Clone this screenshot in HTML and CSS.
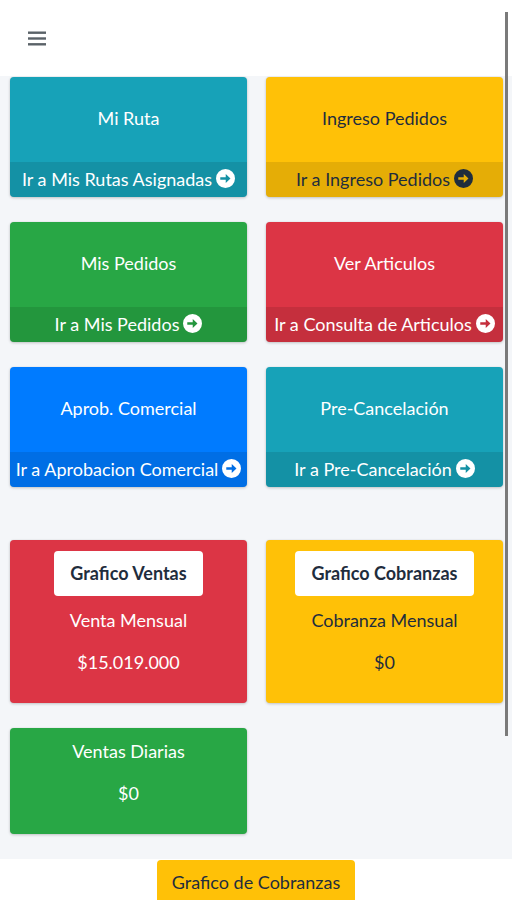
FILE: index.html
```html
<!DOCTYPE html>
<html lang="es">

<head>
    <meta charset="UTF-8">
    <meta name="viewport" content="width=device-width, initial-scale=1.0">
    <title>Inicio</title>
    <link rel="stylesheet" href="styles.css">
</head>

<body>
    <nav class="navbar">
        <span class="menu-toggle">
            <svg width="18" height="15" viewBox="0 0 18 15">
                <rect x="0" y="0.5" width="18" height="2.4" fill="#5a6268"/>
                <rect x="0" y="6.3" width="18" height="2.4" fill="#5a6268"/>
                <rect x="0" y="12.1" width="18" height="2.4" fill="#5a6268"/>
            </svg>
        </span>
    </nav>

    <div class="content">
        <div class="grid">
            <div class="small-box bg-info">
                <div class="inner">Mi Ruta</div>
                <a class="box-footer">Ir a Mis Rutas Asignadas <svg class="arrow" viewBox="0 0 16 16"><path fill-rule="evenodd" d="M8 0a8 8 0 1 0 0 16A8 8 0 1 0 8 0zM3.6 6.9h4.6V4.2L12.2 8l-4 3.8V9.1H3.6z"/></svg></a>
            </div>
            <div class="small-box bg-warning">
                <div class="inner">Ingreso Pedidos</div>
                <a class="box-footer">Ir a Ingreso Pedidos <svg class="arrow" viewBox="0 0 16 16"><path fill-rule="evenodd" d="M8 0a8 8 0 1 0 0 16A8 8 0 1 0 8 0zM3.6 6.9h4.6V4.2L12.2 8l-4 3.8V9.1H3.6z"/></svg></a>
            </div>
            <div class="small-box bg-success">
                <div class="inner">Mis Pedidos</div>
                <a class="box-footer">Ir a Mis Pedidos <svg class="arrow" viewBox="0 0 16 16"><path fill-rule="evenodd" d="M8 0a8 8 0 1 0 0 16A8 8 0 1 0 8 0zM3.6 6.9h4.6V4.2L12.2 8l-4 3.8V9.1H3.6z"/></svg></a>
            </div>
            <div class="small-box bg-danger">
                <div class="inner">Ver Articulos</div>
                <a class="box-footer">Ir a Consulta de Articulos <svg class="arrow" viewBox="0 0 16 16"><path fill-rule="evenodd" d="M8 0a8 8 0 1 0 0 16A8 8 0 1 0 8 0zM3.6 6.9h4.6V4.2L12.2 8l-4 3.8V9.1H3.6z"/></svg></a>
            </div>
            <div class="small-box bg-primary">
                <div class="inner">Aprob. Comercial</div>
                <a class="box-footer">Ir a Aprobacion Comercial <svg class="arrow" viewBox="0 0 16 16"><path fill-rule="evenodd" d="M8 0a8 8 0 1 0 0 16A8 8 0 1 0 8 0zM3.6 6.9h4.6V4.2L12.2 8l-4 3.8V9.1H3.6z"/></svg></a>
            </div>
            <div class="small-box bg-info">
                <div class="inner">Pre-Cancelación</div>
                <a class="box-footer">Ir a Pre-Cancelación <svg class="arrow" viewBox="0 0 16 16"><path fill-rule="evenodd" d="M8 0a8 8 0 1 0 0 16A8 8 0 1 0 8 0zM3.6 6.9h4.6V4.2L12.2 8l-4 3.8V9.1H3.6z"/></svg></a>
            </div>
        </div>

        <div class="grid stats">
            <div class="stat-box bg-danger">
                <button class="chart-btn">Grafico Ventas</button>
                <p>Venta Mensual</p>
                <p>$15.019.000</p>
            </div>
            <div class="stat-box bg-warning">
                <button class="chart-btn">Grafico Cobranzas</button>
                <p>Cobranza Mensual</p>
                <p>$0</p>
            </div>
            <div class="stat-box bg-success">
                <p>Ventas Diarias</p>
                <p>$0</p>
            </div>
        </div>
    </div>

    <footer class="footer">
        <button class="footer-btn">Grafico de Cobranzas</button>
    </footer>

    <div class="scroll-thumb"></div>
</body>

</html>
```

FILE: styles.css
```css
body {
    font-family: Lato, "Open Sans", sans-serif;
    margin: 0;
    background-color: #f4f6f9;
    color: #1f2d3d;
    height: 900px;
    overflow: hidden;
}

.navbar {
    height: 76px;
    background-color: #fff;
    display: flex;
    align-items: center;
    padding-left: 28px;
}

.menu-toggle {
    display: flex;
}

.content {
    padding: 1px 9px 0 10px;
}

.grid {
    display: grid;
    grid-template-columns: 1fr 1fr;
    column-gap: 19px;
    row-gap: 25px;
}

.stats {
    margin-top: 53px;
    align-items: start;
}

.small-box,
.stat-box {
    border-radius: 4px;
    box-shadow: 0 0 1px rgba(0, 0, 0, 0.125), 0 1px 3px rgba(0, 0, 0, 0.2);
    color: #fff;
    text-align: center;
    font-size: 18px;
}

.small-box {
    height: 120px;
    display: flex;
    flex-direction: column;
    overflow: hidden;
}

.small-box .inner {
    flex: 1;
    display: flex;
    align-items: center;
    justify-content: center;
    padding-bottom: 3px;
}

.box-footer {
    height: 35px;
    box-sizing: border-box;
    padding-bottom: 2px;
    display: flex;
    align-items: center;
    justify-content: center;
    gap: 4px;
    background-color: rgba(0, 0, 0, 0.1);
    white-space: nowrap;
}

.arrow {
    width: 19px;
    height: 19px;
    flex-shrink: 0;
    fill: currentColor;
}

.bg-info {
    background-color: #17a2b8;
}

.bg-warning {
    background-color: #ffc107;
    color: #1f2d3d;
}

.bg-success {
    background-color: #28a745;
}

.bg-danger {
    background-color: #dc3545;
}

.bg-primary {
    background-color: #007bff;
}

.stat-box {
    padding: 11px 10px 29px;
}

.stat-box p {
    margin: 0;
    line-height: 24px;
}

.stat-box p + p {
    margin-top: 18px;
}

.chart-btn {
    display: block;
    margin: 0 auto 12px;
    height: 45px;
    padding: 0 16px 2px;
    border: none;
    border-radius: 4px;
    background-color: #fff;
    color: #1f2d3d;
    font-family: inherit;
    font-size: 18px;
    font-weight: bold;
}

.footer {
    margin-top: 25px;
    background-color: #fff;
    display: flex;
    justify-content: center;
    padding-top: 1px;
    height: 60px;
}

.footer-btn {
    width: 198px;
    height: 44px;
    padding-bottom: 2px;
    border: none;
    border-radius: 4px;
    background-color: #ffc107;
    color: #1f2d3d;
    font-family: inherit;
    font-size: 18px;
}

.scroll-thumb {
    position: fixed;
    top: 12px;
    right: 4px;
    width: 3px;
    height: 724px;
    background-color: #7a7a7a;
}
```
